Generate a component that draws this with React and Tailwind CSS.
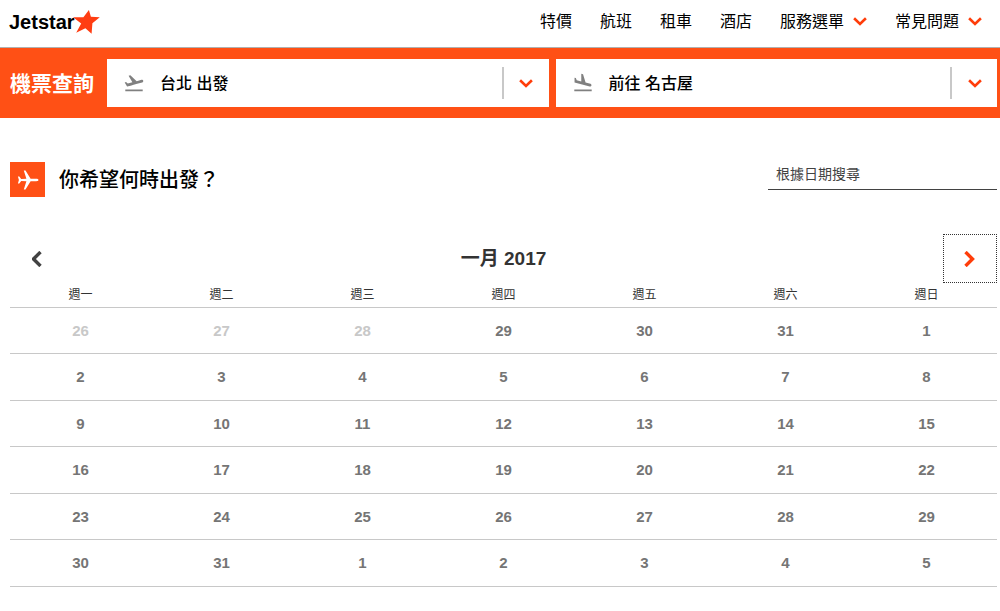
import React from 'react'
import { MdFlightLand, MdFlightTakeoff } from 'react-icons/md'

const links = ['特價', '航班', '租車', '酒店']
const menus = ['服務選單', '常見問題']

const weekdays = ['週一', '週二', '週三', '週四', '週五', '週六', '週日']

const weeks = [
  [26, 27, 28, 29, 30, 31, 1],
  [2, 3, 4, 5, 6, 7, 8],
  [9, 10, 11, 12, 13, 14, 15],
  [16, 17, 18, 19, 20, 21, 22],
  [23, 24, 25, 26, 27, 28, 29],
  [30, 31, 1, 2, 3, 4, 5],
]

const ChevronDown = () => (
  <svg className="h-[9px] w-[14px]" viewBox="0 0 14 9" fill="none" stroke="#ff3d0a" strokeWidth="2.6" aria-hidden="true">
    <path d="M1.1 1.3 L7 7 L12.9 1.3" />
  </svg>
)

const Logo = () => (
  <a href="#" aria-label="Jetstar" className="flex items-center text-xl leading-6 font-bold text-black">
    Jetstar
    <svg className="-ml-[2px] h-6 w-[27px]" viewBox="0 0 27 24" fill="#ff3d12" aria-hidden="true">
      <path d="M15.9 0 L17.9 6.7 L26.8 7.2 L19.4 13.2 L18.6 23.8 L12.4 18.2 L3.2 22.8 L8.2 13.4 L0 7.2 L10.4 7.3 Z" />
    </svg>
  </a>
)

const Plane = () => (
  <svg className="h-[22px] w-[22px]" viewBox="0 0 22 22" fill="#fff" aria-hidden="true">
    <path d="M21.5 11 C21.5 10.2 20.3 9.8 19.3 9.8 L13.6 9.8 L8.5 1.5 L6.8 1.5 L9.4 9.8 L4.2 10 L2.3 7.6 L0.9 7.6 L1.9 11 L0.9 14.4 L2.3 14.4 L4.2 12 L9.4 12.2 L6.8 20.5 L8.5 20.5 L13.6 12.2 L19.3 12.2 C20.3 12.2 21.5 11.8 21.5 11 Z" />
  </svg>
)

const Field = ({ label, icon, options }) => (
  <div className="relative flex-1">
    <select
      aria-label={label}
      className="block h-12 w-full appearance-none rounded-none bg-white pt-px pr-12 pl-[53px] text-base font-medium text-black"
    >
      {options.map((option) => (
        <option key={option}>{option}</option>
      ))}
    </select>
    <span className="pointer-events-none absolute inset-y-0 left-4 flex items-center text-[22px] text-[#808080]">{icon}</span>
    <span className="pointer-events-none absolute inset-y-2 right-0 flex w-[47px] items-center justify-center border-l-2 border-[#c8c8c8]">
      <ChevronDown />
    </span>
  </div>
)

const Calendar = () => (
  <section className="mt-9">
    <div className="flex h-[50px] items-center justify-between pt-px">
      <button type="button" aria-label="上個月" className="flex h-12 w-[54px] items-center justify-center">
        <svg className="h-4 w-[11px]" viewBox="0 0 11 16" fill="none" stroke="#424242" strokeWidth="3.4" aria-hidden="true">
          <path d="M8.5 1 L1.5 8 L8.5 15" />
        </svg>
      </button>
      <h2 className="pt-px text-[19px] font-bold text-[#333]">一月 2017</h2>
      <button
        type="button"
        aria-label="下個月"
        className="flex h-[49px] w-[54px] items-center justify-center border border-dotted border-[#333]"
      >
        <svg className="h-4 w-[11px]" viewBox="0 0 11 16" fill="none" stroke="#ff3d0a" strokeWidth="3.4" aria-hidden="true">
          <path d="M1.5 1 L8.5 8 L1.5 15" />
        </svg>
      </button>
    </div>
    <table className="h-[304px] w-full table-fixed border-collapse text-center">
      <thead>
        <tr className="border-b border-[#c8c8c8]">
          {weekdays.map((day) => (
            <th key={day} scope="col" className="h-6 text-xs font-normal text-[#333]">{day}</th>
          ))}
        </tr>
      </thead>
      <tbody className="text-[15px] font-bold text-[#757575]">
        {weeks.map((week, i) => (
          <tr key={i} className="border-b border-[#c8c8c8]">
            {week.map((day, j) => (
              <td key={j} className={i === 0 && j < 3 ? 'pt-px text-[#c8c8c8]' : 'pt-px'}>{day}</td>
            ))}
          </tr>
        ))}
      </tbody>
    </table>
  </section>
)

const App = () => {
  return (
    <div className="min-h-screen bg-white font-['Liberation_Sans','Noto_Sans_CJK_TC',sans-serif]">
      <header className="flex h-12 items-center justify-between border-b border-[#b0b0b0] pr-[18px] pb-1 pl-[9px]">
        <Logo />
        <nav className="flex items-center gap-7 text-base text-black">
          {links.map((item) => (
            <a key={item} href="#">{item}</a>
          ))}
          {menus.map((item) => (
            <button key={item} type="button" className="flex items-center gap-[9px]">
              {item}
              <ChevronDown />
            </button>
          ))}
        </nav>
      </header>

      <div className="flex h-[70px] items-center bg-[#ff5015] pr-[3px] pl-[10px]">
        <h1 className="mr-[13px] shrink-0 pt-px text-[21px] font-bold text-white">機票查詢</h1>
        <div className="flex flex-1 gap-[7px]">
          <Field label="出發地" icon={<MdFlightTakeoff />} options={['台北 出發']} />
          <Field label="目的地" icon={<MdFlightLand />} options={['前往 名古屋']} />
        </div>
      </div>

      <main className="pt-11 pr-[3px] pl-[10px]">
        <div className="flex items-start justify-between">
          <div className="flex items-center gap-[14px]">
            <span className="flex size-[35px] items-center justify-center bg-[#ff5015]">
              <Plane />
            </span>
            <h2 className="text-xl font-medium text-black">你希望何時出發？</h2>
          </div>
          <input
            type="text"
            aria-label="根據日期搜尋"
            placeholder="根據日期搜尋"
            className="h-7 w-[229px] border-b border-[#424242] px-2 pb-1 text-sm text-[#424242] placeholder:text-[#424242]"
          />
        </div>
        <Calendar />
      </main>
    </div>
  )
}

export default App
